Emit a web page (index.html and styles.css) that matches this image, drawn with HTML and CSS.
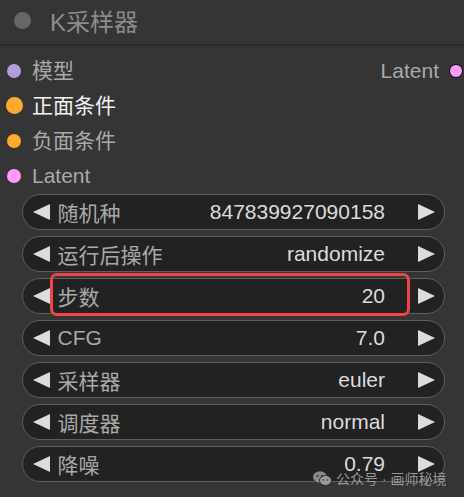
FILE: index.html
```html
<!DOCTYPE html>
<html>
<head>
    <title>K采样器</title>
    <link rel="stylesheet" href="styles.css">
</head>
<body>
    <div class="node">
        <div class="node-title">
            <span class="title-dot"></span>
            <span class="title-text">K采样器</span>
        </div>

        <div class="slots">
            <div class="slot-row">
                <div class="slot"><span class="dot-box"><span class="dot model"></span></span>模型</div>
                <div class="slot slot-out">Latent<span class="dot-box out"><span class="dot latent ring"></span></span></div>
            </div>
            <div class="slot-row">
                <div class="slot active"><span class="dot-box"><span class="dot cond big"></span></span>正面条件</div>
            </div>
            <div class="slot-row">
                <div class="slot"><span class="dot-box"><span class="dot cond"></span></span>负面条件</div>
            </div>
            <div class="slot-row">
                <div class="slot"><span class="dot-box"><span class="dot latent"></span></span>Latent</div>
            </div>
        </div>

        <div class="widgets">
            <div class="widget">
                <svg class="arrow" width="17" height="16" viewBox="0 0 17 16"><polygon points="0,8 17,0 17,16"/></svg>
                <span class="w-label">随机种</span>
                <span class="w-value">847839927090158</span>
                <svg class="arrow" width="17" height="16" viewBox="0 0 17 16"><polygon points="17,8 0,0 0,16"/></svg>
            </div>
            <div class="widget">
                <svg class="arrow" width="17" height="16" viewBox="0 0 17 16"><polygon points="0,8 17,0 17,16"/></svg>
                <span class="w-label">运行后操作</span>
                <span class="w-value">randomize</span>
                <svg class="arrow" width="17" height="16" viewBox="0 0 17 16"><polygon points="17,8 0,0 0,16"/></svg>
            </div>
            <div class="widget">
                <svg class="arrow" width="17" height="16" viewBox="0 0 17 16"><polygon points="0,8 17,0 17,16"/></svg>
                <span class="w-label">步数</span>
                <span class="w-value">20</span>
                <svg class="arrow" width="17" height="16" viewBox="0 0 17 16"><polygon points="17,8 0,0 0,16"/></svg>
                <span class="highlight"></span>
            </div>
            <div class="widget">
                <svg class="arrow" width="17" height="16" viewBox="0 0 17 16"><polygon points="0,8 17,0 17,16"/></svg>
                <span class="w-label">CFG</span>
                <span class="w-value">7.0</span>
                <svg class="arrow" width="17" height="16" viewBox="0 0 17 16"><polygon points="17,8 0,0 0,16"/></svg>
            </div>
            <div class="widget">
                <svg class="arrow" width="17" height="16" viewBox="0 0 17 16"><polygon points="0,8 17,0 17,16"/></svg>
                <span class="w-label">采样器</span>
                <span class="w-value">euler</span>
                <svg class="arrow" width="17" height="16" viewBox="0 0 17 16"><polygon points="17,8 0,0 0,16"/></svg>
            </div>
            <div class="widget">
                <svg class="arrow" width="17" height="16" viewBox="0 0 17 16"><polygon points="0,8 17,0 17,16"/></svg>
                <span class="w-label">调度器</span>
                <span class="w-value">normal</span>
                <svg class="arrow" width="17" height="16" viewBox="0 0 17 16"><polygon points="17,8 0,0 0,16"/></svg>
            </div>
            <div class="widget">
                <svg class="arrow" width="17" height="16" viewBox="0 0 17 16"><polygon points="0,8 17,0 17,16"/></svg>
                <span class="w-label">降噪</span>
                <span class="w-value">0.79</span>
                <svg class="arrow" width="17" height="16" viewBox="0 0 17 16"><polygon points="17,8 0,0 0,16"/></svg>
            </div>
        </div>

        <!-- marca d'agua -->
        <div class="watermark">
            <svg width="19" height="15" viewBox="0 0 19 15">
                <ellipse cx="7" cy="6" rx="7" ry="5.8" fill="#8a8a8a"/>
                <ellipse cx="12.5" cy="9.5" rx="6" ry="5" fill="#9a9a9a" stroke="#2a2a2a" stroke-width="1"/>
                <circle cx="4.5" cy="5" r="1" fill="#2a2a2a"/>
                <circle cx="9" cy="5" r="1" fill="#2a2a2a"/>
                <circle cx="10.5" cy="9" r="0.8" fill="#2a2a2a"/>
                <circle cx="14.5" cy="9" r="0.8" fill="#2a2a2a"/>
            </svg>
            <span>公众号 · 画师秘境</span>
        </div>
    </div>
</body>
</html>
```

FILE: styles.css
```css
body {
    margin: 0;
    background-color: #353535;
    font-family: "Liberation Sans", "Noto Sans CJK SC", sans-serif;
}

.node {
    position: relative;
    width: 464px;
    height: 497px;
    background-color: #353535;
    overflow: hidden;
}

.node-title {
    height: 46px;
    display: flex;
    align-items: flex-start;
    box-sizing: border-box;
    padding: 11px 0 0 14px;
    border-bottom: 2px solid #2a2a2a;
}

.title-dot {
    width: 17px;
    height: 17px;
    border-radius: 50%;
    background-color: #676767;
    margin-top: 1px;
}

.title-text {
    margin-left: 19px;
    font-size: 24px;
    line-height: 24px;
    color: #8c8c8c;
}

.slots {
    padding-top: 7px;
}

.slot-row {
    height: 35px;
    display: flex;
    align-items: center;
    justify-content: space-between;
}

.slot {
    display: flex;
    align-items: center;
    font-size: 21px;
    line-height: 24px;
    color: #a9a9a9;
}

.slot.active {
    color: #f2f2f2;
}

.dot-box {
    width: 28px;
    display: flex;
    justify-content: center;
    margin-right: 4px;
}

.dot-box.out {
    width: 15px;
    margin: 0 1px 0 9px;
}

.dot {
    width: 14px;
    height: 14px;
    border-radius: 50%;
}

.dot.big {
    width: 17px;
    height: 17px;
}

.dot.model {
    background-color: #b39ddb;
}

.dot.cond {
    background-color: #ffa931;
}

.dot.latent {
    background-color: #ff9cf9;
}

.dot.ring {
    width: 12px;
    height: 12px;
    border: 1.5px solid #000;
}

.widgets {
    margin: 1px 19px 0 22px;
    display: flex;
    flex-direction: column;
    gap: 6px;
}

.widget {
    position: relative;
    height: 36px;
    box-sizing: border-box;
    border: 1.5px solid #5e5e5e;
    border-radius: 18px;
    background-color: #222;
    display: flex;
    align-items: center;
    padding: 0 9px 0 9.5px;
    font-size: 21px;
}

.arrow {
    fill: #dcdcdc;
    flex-shrink: 0;
}

.w-label {
    margin-left: 8px;
    color: #a9a9a9;
    flex: 1;
}

.w-value {
    margin-right: 33px;
    color: #dcdcdc;
}

.highlight {
    position: absolute;
    left: 26.5px;
    top: -6.5px;
    width: 360px;
    height: 43px;
    box-sizing: border-box;
    border: 3.5px solid #ee4646;
    border-radius: 7px;
}

.watermark {
    position: absolute;
    left: 313px;
    top: 468px;
    display: flex;
    align-items: center;
    gap: 4px;
    font-size: 14px;
    color: rgba(190, 190, 190, 0.75);
}
```
